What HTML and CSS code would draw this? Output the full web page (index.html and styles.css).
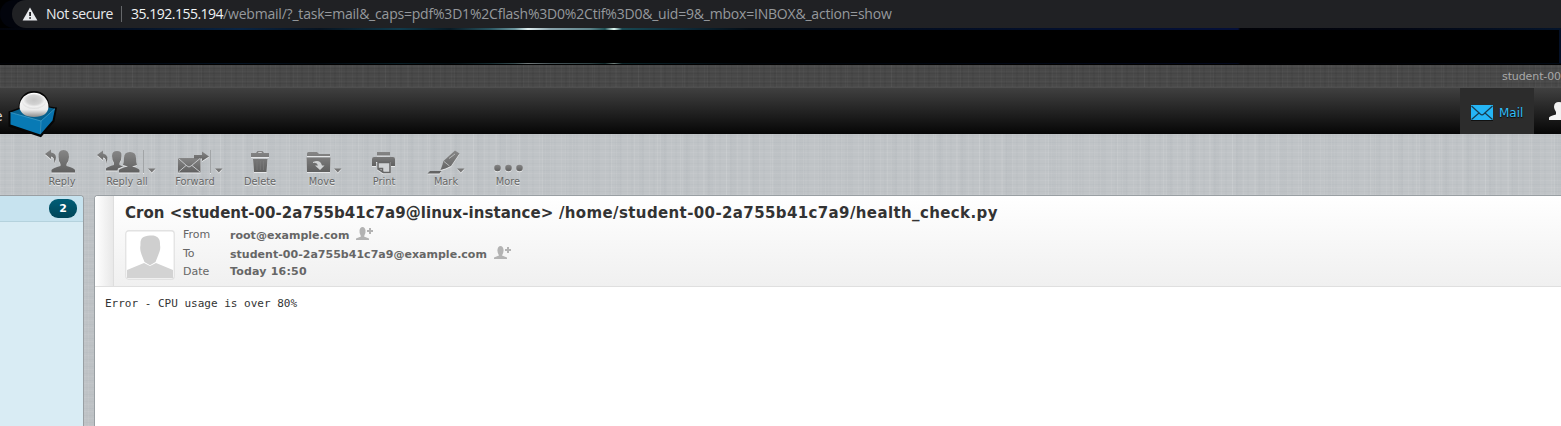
FILE: index.html
```html
<!DOCTYPE html>
<html lang="en">
<head>
<meta charset="utf-8">
<title>Webmail</title>
<link rel="stylesheet" href="styles.css">
</head>
<body>
<div class="browser">
  <div class="address">
    <svg class="warn" viewBox="0 0 16 14"><path d="M8 .5 15.4 13.4H.6z" fill="#e8eaed"/><path d="M7.2 5h1.8v4H7.2zM7.2 10.2h1.8v1.6H7.2z" fill="#202124"/></svg>
    <span class="insecure">Not secure</span>
    <span class="bar"></span>
    <span class="url"><span class="host">35.192.155.194</span><span class="path">/webmail/?_task=mail&amp;_caps=pdf%3D1%2Cflash%3D0%2Ctif%3D0&amp;_uid=9&amp;_mbox=INBOX&amp;_action=show</span></span>
  </div>
  <div class="stars"></div>
  <div class="bookmarks"></div>
  <div class="stars low"></div>
</div>
<div class="topline"><span>student-00</span></div>
<header class="topnav">
  <span class="tail">e</span>
  <svg class="logo" viewBox="8 90 50 48">
    <defs>
      <radialGradient id="ball" cx=".5" cy=".4" r=".6"><stop offset="0" stop-color="#c4c4c4"/><stop offset=".5" stop-color="#d2d2d2"/><stop offset=".75" stop-color="#f1f1f1"/><stop offset="1" stop-color="#dcdcdc"/></radialGradient>
      <linearGradient id="side" x1="0" y1="0" x2="0" y2="1"><stop offset="0" stop-color="#fff"/><stop offset=".7" stop-color="#ececec"/><stop offset="1" stop-color="#8b8b8b"/></linearGradient>
    </defs>
    <path d="M8.500 111.500 18.500 108C19 97 25 91 34 91S49 97 49.500 106.500L57 107.500 54.500 121.500 41 137.300 8.500 126.500z" fill="#060606"/>
    <path d="M10.500 112.500 20 109 49 107.500 55 108.700 41 122.500z" fill="#06618f"/>
    <path d="M10.500 112.500 41 121 40.300 134.500 10.500 124.500z" fill="#087ab5"/>
    <path d="M41 121 55 108.700 52.500 120.500 40.300 134.500z" fill="#0873ae"/>
    <path d="M10.500 112.500 41 121 55 108.700M41 121 40.300 134" fill="none" stroke="#46a5d0" stroke-width=".7"/>
    <path d="M19.500 107C19.500 99 26 92.800 34 92.800S48.500 99 48.500 107C48 113.500 43 117 34 117S20 113 19.500 107z" fill="url(#side)"/>
    <ellipse cx="34" cy="101.500" rx="12" ry="7.500" fill="url(#ball)"/>
  </svg>
  <div class="tabs">
    <div class="tab active">
      <svg class="envelope" viewBox="0 0 22 16"><path d="M0 0H22V15H0z" fill="#25b5f5"/><path d="M.5 1 9 8.800Q11 10.800 13 8.800L21.500 1M.5 14.500 8 8M21.500 14.500 14 8" fill="none" stroke="#183c50" stroke-width="1.200"/><path d="M0 15.500H22" stroke="#111"/></svg>
      <span>Mail</span>
    </div>
    <svg class="contacts" viewBox="1549 101 24 22"><path d="M1549 120V117.500Q1550 116 1556 114.500V112Q1554 109 1554 107 1554 102 1559 102T1564 107Q1564 110 1562 112V114.500L1569 118V120z" fill="#f2f2f2"/></svg>
  </div>
</header>
<nav class="toolbar">
  <svg class="defs" width="0" height="0"><defs>
    <linearGradient id="ink" x1="0" y1="0" x2="0" y2="1"><stop offset="0" stop-color="#868686"/><stop offset="1" stop-color="#606060"/></linearGradient>
  </defs></svg>
  <a class="tool narrow"><svg class="ico" viewBox="40 149 44 26"><g fill="url(#ink)"><path d="M45 154 51 149.500V152.500Q59 154 54 163.500 55 157 51 156.500V159z"/><path d="M51.500 172.500V170Q53 168 60.500 166V164Q58.500 161 58.500 157 58 150 63.500 150T69 157Q69 161 66.500 164V166Q74 168 75 170V172.500z"/></g></svg><span>Reply</span></a>
  <a class="tool wide"><svg class="ico" viewBox="84 149 86 26"><g fill="url(#ink)"><path d="M97 155 103 150.500V153.500Q110 155 106 164 107 158 103 157.500V160z"/><path d="M106 170.500V168.500Q108 166.500 114 165V163Q112 160 112 156 112 151 117 151T121.500 156Q121.500 160 119.500 163V165L123 166.500 118 168.500 117.500 170.500z"/><path d="M119 172.500V170Q121 168 128 166.500L123 165Q124 162 124 158 124 152 130 152T136 158Q136 162 137 165L132 166.500Q138 168 139.500 170V172.500z"/></g><path class="rule" d="M143.500 150V173"/><path class="arrow" d="M148 168.500H155.500L151.800 172.500z"/></svg><span>Reply all</span></a>
  <a class="tool mid"><svg class="ico" viewBox="170 149 50 26"><g fill="url(#ink)"><path d="M178 158H200.500V172.500H178z"/><path d="M194 155H202V151.500L209 156.500 202 161V158.500H194z"/></g><path d="M178.500 158.500 187 166Q189 168 191 166L200 158.500M178.500 172 186 165.500M200 172 192 165.500" fill="none" stroke="#c6c8ca"/><path class="rule" d="M210.500 150V173"/><path class="arrow" d="M215 168.500H222.500L218.800 172.500z"/></svg><span>Forward</span></a>
  <a class="tool wide80"><svg class="ico" viewBox="220 149 80 26"><g fill="url(#ink)"><path d="M251 153H256L257.500 151H262.500L264 153H269V157H251zM258 153H262L261.500 152.300H258.500zM253 159H267.500L266.500 172H254z" fill-rule="evenodd"/></g><path d="M257 161V170M260.300 161V170M263.500 161V170" stroke="#7c7c7c" stroke-width=".7"/></svg><span>Delete</span></a>
  <a class="tool narrow"><svg class="ico" viewBox="300 149 44 26"><g fill="url(#ink)"><path d="M307 156V153.500Q307 152 308.500 152H317L319 154H330V156zM306.500 157.500H330.500L330 172H307z"/></g><path d="M313 162Q320 159 322 165.500H324.500L320 170 315 165.500H318Q317 162 313 163z" fill="#d1d3d4"/><path class="arrow" d="M334 168.500H341.500L337.800 172.500z"/></svg><span>Move</span></a>
  <a class="tool wide80"><svg class="ico" viewBox="344 149 80 26"><g fill="url(#ink)"><path d="M377 152H390V155.500H377zM374 157H393Q395 157 395 159V166H391V162H376V166H372V159Q372 157 374 157z"/></g><path d="M378 162.500V169L383.500 172.500H390V162.500z" fill="#d1d3d5" stroke="#666" stroke-width="1.500"/><path d="M378 168.500H382.500V172.500" fill="none" stroke="#666" stroke-width="1.500"/></svg><span>Print</span></a>
  <a class="tool narrow"><svg class="ico" viewBox="424 149 44 26"><g fill="url(#ink)"><path d="M455 150.500 459.500 153.500 451 166 445.500 168.500 440.500 170 442 166 443.500 161zM430 171H441.500L439.500 173.500H427.500z"/></g><path d="M444 161.500 449.500 166M449 158.500 455 154" stroke="#c8caca" stroke-width=".8"/><path class="arrow" d="M457 168.500H464.500L460.800 172.500z"/></svg><span>Mark</span></a>
  <a class="tool wide80"><svg class="ico" viewBox="468 149 80 26"><g fill="url(#ink)"><circle cx="497.500" cy="168" r="3.300"/><circle cx="508.500" cy="168" r="3.300"/><circle cx="519.500" cy="168" r="3.300"/></g></svg><span>More</span></a>
</nav>
<main class="content">
  <aside class="folders"><div class="inbox"><span class="badge">2</span></div></aside>
  <section class="message">
    <div class="head">
      <div class="handle"></div>
      <div class="info">
        <h1><span class="origin">Cron &lt;student-00-2a755b41c7a9@linux-instance&gt;</span> /home/student-00-2a755b41c7a9/health_check.py</h1>
        <div class="row">
          <svg class="photo" viewBox="0 0 50 50"><rect x=".75" y=".75" width="48.500" height="48.500" rx="3" fill="#fff" stroke="#e2e2e2" stroke-width="1.300"/><path d="M2 48V40L19 33 25 36 31 33 48 40V48z" fill="#d3d3d3"/><path d="M15.500 15C15 8 18 6 25 5.500S35.500 8 35 15C36 20 34 23 32.500 27L30.500 32 25 35.300 19.500 32 17.500 27C16 23 14.500 20 15.500 15z" fill="#cfcfcf"/></svg>
          <dl>
            <dt>From</dt><dd>root@example.com <svg class="add" viewBox="0 0 18 14"><path d="M0 13V11.500L5 9.500Q3 6 3.500 3.500 4 0 6.500 0T9.500 3.500Q10 6 8 9.500L13 11.500V13zM13 1H15V3H17V5H15V7H13V5H11V3H13z" fill="#b3b3b3"/></svg></dd>
            <dt>To</dt><dd>student-00-2a755b41c7a9@example.com <svg class="add" viewBox="0 0 18 14"><path d="M0 13V11.500L5 9.500Q3 6 3.500 3.500 4 0 6.500 0T9.500 3.500Q10 6 8 9.500L13 11.500V13zM13 1H15V3H17V5H15V7H13V5H11V3H13z" fill="#b3b3b3"/></svg></dd>
            <dt>Date</dt><dd class="date">Today 16:50</dd>
          </dl>
        </div>
      </div>
    </div>
    <pre>Error - CPU usage is over 80%</pre>
  </section>
</main>
</body>
</html>
```
FILE: styles.css
```css
* { box-sizing: border-box; }
body { margin: 0; width: 1561px; height: 426px; overflow: hidden; display: flex; flex-direction: column; font-family: "DejaVu Sans", sans-serif;
  background:
    repeating-linear-gradient(90deg, rgba(255,255,255,.06) 0 1px, transparent 1px 4px, rgba(90,100,110,.025) 4px 6px, transparent 6px 11px),
    repeating-linear-gradient(90deg, transparent 0 13px, rgba(255,255,255,.08) 13px 14px, transparent 14px 17px, rgba(90,100,110,.025) 17px 23px),
    repeating-linear-gradient(0deg, rgba(255,255,255,.06) 0 1px, transparent 1px 3px, rgba(90,100,110,.03) 3px 4px, transparent 4px 7px),
    #c0c4c7; }
svg { display: block; overflow: visible; flex: none; }
.browser { height: 65px; background: #000; flex: none; }
.address { height: 28px; margin-left: 12px; padding-left: 10px; border-radius: 14px 0 0 14px; background: #202124; display: flex; align-items: center; font: 14px/28px "Open Sans", sans-serif; color: #e8eaed; white-space: nowrap; box-shadow: -12px 0 0 #02040c; }
.warn { width: 16px; height: 14px; }
.insecure { width: 67px; margin-left: 8px; color: #e8eaed; letter-spacing: -.4px; }
.bar { width: 1px; height: 16px; margin: 0 9px 0 8px; background: #65676a; }
.host { color: #f1f3f4; letter-spacing: -.5px; }
.path { color: #96999d; letter-spacing: -.205px; }
.stars { height: 2px; background: linear-gradient(90deg, #02040b 0, #030c1d 110px, #082444 240px, #06121f 320px, #103b4c 400px, #071923 450px, #285561 490px, #6d979f 515px, #e2f0f2 528px, #8ba4ad 550px, #5f858c 590px, #1c4f54 605px, #e6fff8 614px, #174852 622px, #0d2c3b 680px, #020a13 750px, #030f2b 1050px, #040f38 1238px, #010207 1240px, #020511 1400px, #04142b 1561px); }
.bookmarks { height: 33px; border-right: 2px solid #041027; background: #000; }
.low { height: 1px; opacity: .5; }
.topline { height: 23px; flex: none; border-bottom: 1px solid #4e4e4e; color: #a8a8a8; font-size: 11px; line-height: 23px; padding-left: 1502px; overflow: hidden; white-space: nowrap; letter-spacing: -.1px;
  background:
    repeating-linear-gradient(90deg, rgba(255,255,255,.025) 0 1px, transparent 1px 4px, rgba(0,0,0,.04) 4px 6px, transparent 6px 11px),
    repeating-linear-gradient(90deg, transparent 0 17px, rgba(255,255,255,.025) 17px 18px, transparent 18px 23px),
    repeating-linear-gradient(0deg, rgba(255,255,255,.02) 0 1px, transparent 1px 3px, rgba(0,0,0,.06) 3px 4px, transparent 4px 5px), #494949; }
.topnav { height: 46px; flex: none; display: flex; background: linear-gradient(#404040, #060606); }
.tail { width: 8px; color: #d8d8d8; font-size: 14px; line-height: 57px; text-indent: -6px; }
.logo { width: 50px; height: 48px; margin-top: 2px; }
.tabs { display: flex; margin-left: auto; width: 101px; }
.tab { width: 74px; flex: none; background: #2c2c2c; display: flex; align-items: center; padding: 2px 0 0 11px; gap: 6px; color: #33bdf6; font-size: 12px; text-shadow: 0 1px 1px #000; }
.tab span { padding-top: 1px; }
.envelope { width: 22px; height: 16px; margin-top: 2px; }
.contacts { width: 24px; height: 22px; margin: 13px 0 0 15px; }
.toolbar { height: 61px; flex: none; display: flex; padding: 15px 0 0 40px; }
.defs { position: absolute; }
.tool { display: flex; flex-direction: column; align-items: center; color: #666; font-size: 9.8px; line-height: 14px; text-shadow: 0 1px 0 #e8eaeb; white-space: nowrap; }
.ico { height: 26px; width: 100%; filter: drop-shadow(0 1px 0 rgba(255,255,255,.6)); }
.narrow { width: 44px; } .wide { width: 86px; } .mid { width: 50px; } .wide80 { width: 80px; }
.rule { stroke: #a2a5a7; }
.arrow { fill: #777; }
.content { height: 231px; display: flex; gap: 10px; }
.folders { width: 84px; background: #d9ecf4; border: solid #999fa3; border-width: 1px 1px 0 0; border-radius: 0 4px 0 0; overflow: hidden; }
.inbox { height: 26px; background: #c7e3ef; border-bottom: 1px solid #b5d2dd; padding: 3px 6px 0 0; }
.badge { display: block; margin-left: auto; width: 28px; height: 19px; border-radius: 9px; background: linear-gradient(#005d76, #004558); color: #fff; text-align: center; font: bold 11px/20px "DejaVu Sans", sans-serif; }
.message { width: 1467px; background: #fff; border: solid #999fa3; border-width: 1px 0 0 1px; border-radius: 4px 0 0 0; overflow: hidden; }
.head { height: 91px; display: flex; border-bottom: 1px solid #dfdfdf; background: linear-gradient(#fff, #f0f0f0); }
.handle { width: 19px; background: linear-gradient(90deg, #fff, #e8e8e8); border-right: 1px solid #dedede; }
.info { padding: 6px 0 0 11px; }
h1 { margin: 0; height: 28px; font-size: 15px; line-height: 22px; color: #333; white-space: nowrap; letter-spacing: .38px; }
.origin { letter-spacing: .045px; }
.row { display: flex; gap: 8px; }
.photo { width: 50px; height: 50px; }
dl { margin: -4px 0 0; display: grid; grid-template: 19px 18px 18px / 47px auto; line-height: 18px; font-size: 11px; color: #666; }
dd { margin: 1px 0 0; display: flex; gap: 7px; font-weight: bold; white-space: nowrap; letter-spacing: .02px; }
.date { margin-top: 0; letter-spacing: .2px; }
.add { width: 18px; height: 14px; margin-top: 0; }
pre { margin: 9px 0 0 10px; font: 11px/15px "DejaVu Sans Mono", monospace; color: #333; }
```
